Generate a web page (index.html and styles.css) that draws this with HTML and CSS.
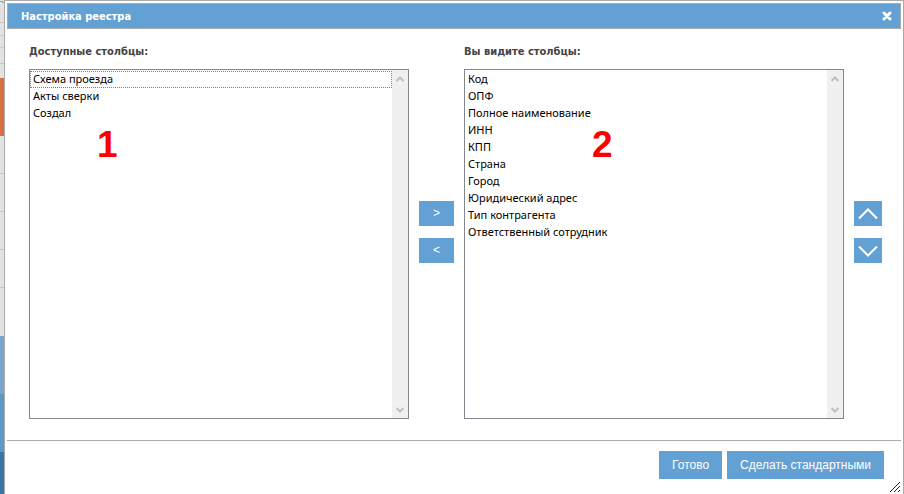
FILE: index.html
```html
<!DOCTYPE html>
<html lang="ru">
<head>
<meta charset="utf-8">
<title>Настройка реестра</title>
<link rel="stylesheet" href="styles.css">
</head>
<body>
<div class="backdrop" aria-hidden="true">
  <svg viewBox="0 0 4 494" shape-rendering="crispEdges" preserveAspectRatio="xMinYMin slice">
    <rect width="4" height="494" fill="#e2e2e2"/>
    <path d="M0 1h3v1h1v1h-2v-1h-2z" fill="#7fb0d8"/>
    <path d="M0 22.500h4M0 63.500h4M0 173.500h4M0 211.500h4M0 249.500h4M0 287.500h4" stroke="#c4c4c4"/>
    <path d="M0 35h3v1h1M0 47h3v-1h1" stroke="#cfcfcf" fill="none"/>
    <rect y="78" width="4" height="58" fill="#d66f41"/>
    <rect y="336" width="4" height="58" fill="#7aa5cb"/>
    <rect y="394" width="4" height="58" fill="#5c9ac4"/>
    <rect y="452" width="4" height="42" fill="#3f74a8"/>
  </svg>
</div>
<main class="dialog" role="dialog" aria-labelledby="dialog-title">
  <header class="titlebar">
    <h1 class="title" id="dialog-title">Настройка реестра</h1>
    <button class="close" type="button" aria-label="Закрыть">
      <svg width="10" height="10" viewBox="0 0 10 10"><path d="M2 2l6 6M8 2l-6 6" stroke="#fff" stroke-width="3" stroke-linecap="round"/></svg>
    </button>
  </header>
  <div class="content">
    <section class="column">
      <label class="label" for="available">Доступные столбцы:</label>
      <div class="listbox">
        <select class="list list-focused" id="available" multiple>
          <option>Схема проезда</option>
          <option>Акты сверки</option>
          <option>Создал</option>
        </select>
        <div class="scrollbar" aria-hidden="true">
          <svg width="8" height="6" viewBox="0 0 8 6"><path d="M.5 5L4 1.500L7.500 5" fill="none" stroke="#bfbfbf" stroke-width="2"/></svg>
          <svg width="8" height="6" viewBox="0 0 8 6"><path d="M.5 1L4 4.500L7.500 1" fill="none" stroke="#bfbfbf" stroke-width="2"/></svg>
        </div>
        <span class="marker marker-first">1</span>
      </div>
    </section>
    <div class="controls">
      <button class="button move" type="button" aria-label="Добавить">&gt;</button>
      <button class="button move" type="button" aria-label="Убрать">&lt;</button>
    </div>
    <section class="column">
      <label class="label" for="visible">Вы видите столбцы:</label>
      <div class="listbox">
        <select class="list" id="visible" multiple>
          <option>Код</option>
          <option>ОПФ</option>
          <option>Полное наименование</option>
          <option>ИНН</option>
          <option>КПП</option>
          <option>Страна</option>
          <option>Город</option>
          <option>Юридический адрес</option>
          <option>Тип контрагента</option>
          <option>Ответственный сотрудник</option>
        </select>
        <div class="scrollbar" aria-hidden="true">
          <svg width="8" height="6" viewBox="0 0 8 6"><path d="M.5 5L4 1.500L7.500 5" fill="none" stroke="#bfbfbf" stroke-width="2"/></svg>
          <svg width="8" height="6" viewBox="0 0 8 6"><path d="M.5 1L4 4.500L7.500 1" fill="none" stroke="#bfbfbf" stroke-width="2"/></svg>
        </div>
        <span class="marker marker-second">2</span>
      </div>
    </section>
    <div class="controls controls-order">
      <button class="button order" type="button" aria-label="Выше">
        <svg width="20" height="12" viewBox="0 0 20 12"><path d="M1 10.500L10 1.500L19 10.500" fill="none" stroke="#fff" stroke-width="2"/></svg>
      </button>
      <button class="button order" type="button" aria-label="Ниже">
        <svg width="20" height="12" viewBox="0 0 20 12"><path d="M1 1.500L10 10.500L19 1.500" fill="none" stroke="#fff" stroke-width="2"/></svg>
      </button>
    </div>
  </div>
  <footer class="footer">
    <button class="button action" type="button">Готово</button>
    <button class="button action" type="button">Сделать стандартными</button>
  </footer>
  <svg class="grip" width="12" height="12" viewBox="0 0 12 12" aria-hidden="true"><path d="M1 11L11 1M5 11L11 5M9 11L11 9" stroke="#222" fill="none"/></svg>
</main>
</body>
</html>
```
FILE: styles.css
```css
* {
  box-sizing: border-box;
}

body {
  display: flex;
  min-height: 100vh;
  margin: 0;
  background: #fff;
  color: #000;
  font: 11px/17px "Noto Sans", sans-serif;
}

.backdrop {
  position: relative;
  flex: none;
  width: 4px;
  overflow: hidden;
}

.backdrop svg {
  position: absolute;
  width: 100%;
  height: 100%;
}

.dialog {
  position: relative;
  display: flex;
  flex: 1;
  flex-direction: column;
  padding: 2px;
  border: 1px solid #aaa;
  border-bottom: 0;
}

.titlebar {
  display: flex;
  align-items: center;
  justify-content: space-between;
  height: 26px;
  padding: 0 8px 0 13px;
  border: 1px solid #aaa;
  background: #63a1d5;
}

.title {
  margin: 0;
  color: #fff;
  font: bold 11px/17px "DejaVu Sans Condensed", "DejaVu Sans", sans-serif;
}

.close {
  display: flex;
  padding: 0;
  border: 0;
  background: none;
}

.content {
  display: flex;
  gap: 10px;
  padding: 14px 19px 21px 22px;
}

.column {
  display: flex;
  flex: 1;
  flex-direction: column;
  gap: 9px;
}

.label {
  color: #444;
  font: bold 11px/17px "DejaVu Sans Condensed", "DejaVu Sans", sans-serif;
}

.listbox {
  position: relative;
  display: flex;
  height: 350px;
  border: 1px solid #828790;
}

.list {
  flex: 1;
  min-width: 0;
  padding: 1px 0;
  border: 0;
  outline: 0;
  border-radius: 0;
  background: #fff;
  color: #000;
  font: inherit;
  overflow: hidden;
}

.list option {
  height: 17px;
  min-height: 17px;
  padding: 0 3px;
  line-height: 17px;
}

.list-focused option:first-child {
  outline: 1px dotted #3a8ee0;
  outline-offset: -1px;
}

.scrollbar {
  display: flex;
  flex: none;
  flex-direction: column;
  align-items: center;
  justify-content: space-between;
  width: 16px;
  padding: 6px 0 5px;
  background: #f0f0f0;
}

.marker {
  position: absolute;
  top: 55px;
  color: #f00;
  font: bold 37px/40px "Liberation Sans", sans-serif;
  pointer-events: none;
}

.marker-first {
  left: 67px;
}

.marker-second {
  left: 127px;
}

.controls {
  display: flex;
  flex: none;
  flex-direction: column;
  gap: 12px;
  padding-top: 158px;
}

.button {
  display: flex;
  align-items: center;
  justify-content: center;
  padding: 0;
  border: 0;
  border-radius: 0;
  background: #63a1d5;
  color: #fff;
  font: 12px/17px "Liberation Sans", sans-serif;
}

.move {
  width: 35px;
  height: 25px;
}

.order {
  width: 28px;
  height: 25px;
}

.footer {
  display: flex;
  gap: 5px;
  justify-content: flex-end;
  padding: 10px 17px 13px;
  border-top: 1px solid #aaa;
}

.action {
  height: 28px;
  padding: 0 13px;
}

.grip {
  position: absolute;
  right: 2px;
  bottom: 1px;
}
```
